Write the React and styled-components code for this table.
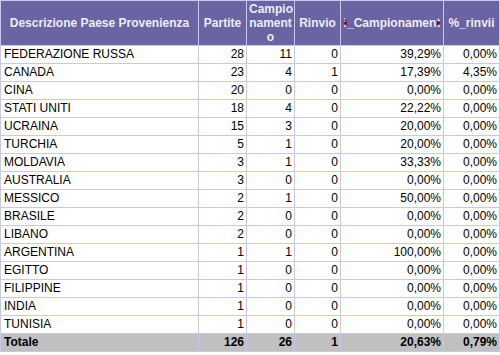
import React from "react"
import styled, { createGlobalStyle } from "styled-components"

const rows = [
  ["FEDERAZIONE RUSSA", 28, 11, 0, "39,29%", "0,00%"],
  ["CANADA", 23, 4, 1, "17,39%", "4,35%"],
  ["CINA", 20, 0, 0, "0,00%", "0,00%"],
  ["STATI UNITI", 18, 4, 0, "22,22%", "0,00%"],
  ["UCRAINA", 15, 3, 0, "20,00%", "0,00%"],
  ["TURCHIA", 5, 1, 0, "20,00%", "0,00%"],
  ["MOLDAVIA", 3, 1, 0, "33,33%", "0,00%"],
  ["AUSTRALIA", 3, 0, 0, "0,00%", "0,00%"],
  ["MESSICO", 2, 1, 0, "50,00%", "0,00%"],
  ["BRASILE", 2, 0, 0, "0,00%", "0,00%"],
  ["LIBANO", 2, 0, 0, "0,00%", "0,00%"],
  ["ARGENTINA", 1, 1, 0, "100,00%", "0,00%"],
  ["EGITTO", 1, 0, 0, "0,00%", "0,00%"],
  ["FILIPPINE", 1, 0, 0, "0,00%", "0,00%"],
  ["INDIA", 1, 0, 0, "0,00%", "0,00%"],
  ["TUNISIA", 1, 0, 0, "0,00%", "0,00%"],
]

const GlobalStyle = createGlobalStyle`
  body {
    margin: 0;
    background: #ffffff;
    font-family: "Liberation Sans", Arial, sans-serif;
  }
`

const Sheet = styled.table`
  border-collapse: collapse;
  table-layout: fixed;
  width: 499px;
  font-family: "Liberation Sans", Arial, sans-serif;
  font-size: 12px;
  color: #000;
`

const HeadCell = styled.th`
  height: 44px;
  padding: 0 2px;
  background: #6a64a2;
  color: #ececf6;
  font-weight: bold;
  font-size: 12px;
  line-height: 14px;
  text-align: center;
  vertical-align: middle;
  border: 1px solid #c9c7ec;
  position: relative;
`

const Clip = styled.div`
  display: flex;
  justify-content: center;
  overflow: hidden;
  white-space: nowrap;
  margin: 0 1px;
`

const Arrow = styled.span`
  position: absolute;
  top: 19px;
  width: 0;
  height: 0;
  border-top: 3.5px solid transparent;
  border-bottom: 3.5px solid transparent;
  ${(p) =>
    p.$side === "left"
      ? "left: 2px; border-right: 4px solid #7a1030;"
      : "right: 2px; border-left: 4px solid #7a1030;"}
`

const Cell = styled.td`
  height: 17px;
  padding: 0 2px 0 3px;
  line-height: 17px;
  font-size: 12px;
  border: 1px solid #c9c7ec;
  white-space: nowrap;
  overflow: hidden;
  text-align: ${(p) => (p.$num ? "right" : "left")};
`

const TotalCell = styled(Cell)`
  background: #c0c0c0;
  font-weight: bold;
`

const App = () => {
  return (
    <>
      <GlobalStyle />
      <Sheet>
        <colgroup>
          <col style={{ width: 198 }} />
          <col style={{ width: 48 }} />
          <col style={{ width: 48 }} />
          <col style={{ width: 46 }} />
          <col style={{ width: 103 }} />
          <col style={{ width: 56 }} />
        </colgroup>
        <thead>
          <tr>
            <HeadCell>Descrizione Paese Provenienza</HeadCell>
            <HeadCell>Partite</HeadCell>
            <HeadCell>
              Campio
              <br />
              nament
              <br />o
            </HeadCell>
            <HeadCell>Rinvio</HeadCell>
            <HeadCell>
              <Arrow $side="left" />
              <Clip>%_Campionamento</Clip>
              <Arrow $side="right" />
            </HeadCell>
            <HeadCell>%_rinvii</HeadCell>
          </tr>
        </thead>
        <tbody>
          {rows.map((r) => (
            <tr key={r[0]}>
              <Cell>{r[0]}</Cell>
              <Cell $num>{r[1]}</Cell>
              <Cell $num>{r[2]}</Cell>
              <Cell $num>{r[3]}</Cell>
              <Cell $num>{r[4]}</Cell>
              <Cell $num>{r[5]}</Cell>
            </tr>
          ))}
          <tr>
            <TotalCell>Totale</TotalCell>
            <TotalCell $num>126</TotalCell>
            <TotalCell $num>26</TotalCell>
            <TotalCell $num>1</TotalCell>
            <TotalCell $num>20,63%</TotalCell>
            <TotalCell $num>0,79%</TotalCell>
          </tr>
        </tbody>
      </Sheet>
    </>
  )
}

export default App
